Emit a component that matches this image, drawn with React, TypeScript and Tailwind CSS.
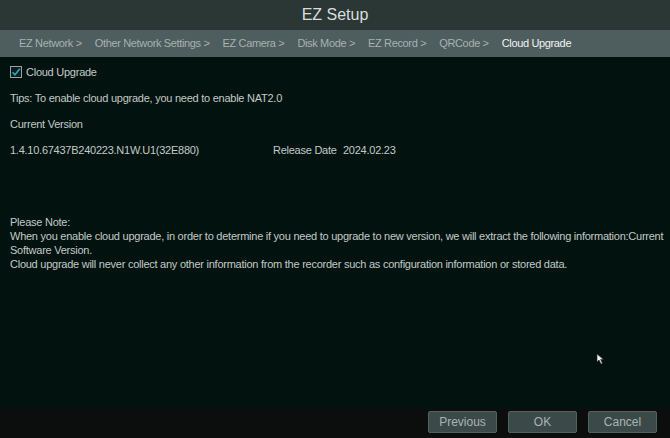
import React from 'react';

const tabs = [
  'EZ Network >',
  'Other Network Settings >',
  'EZ Camera >',
  'Disk Mode >',
  'EZ Record >',
  'QRCode >',
];

const Btn: React.FC<{ label: string }> = ({ label }) => (
  <button className="w-[69px] h-[22px] bg-[#3b4a48] border border-[#55635f] rounded-[2px] text-[12px] text-[#a9b4b1]">
    {label}
  </button>
);

export default function App() {
  return (
    <div
      className="relative w-[670px] h-[438px] flex flex-col bg-[#02130f] overflow-hidden"
      style={{ fontFamily: '"Liberation Sans", Arial, sans-serif' }}
    >
      <div className="h-[30px] bg-[#2b3734] flex items-center justify-center text-[16px] text-[#d9dedd]">
        EZ Setup
      </div>
      <div className="h-[27px] bg-[#4e5d5d] flex items-center pl-[19px] gap-[13px] text-[11px] tracking-[-0.35px] text-[#a8b2b1]">
        {tabs.map((t) => (
          <span key={t}>{t}</span>
        ))}
        <span className="text-[#f2f4f4]">Cloud Upgrade</span>
      </div>

      <div className="flex-1 px-[10px] text-[11px] tracking-[-0.25px] text-[#c3c9c7]">
        <div className="mt-[8px] h-[14px] flex items-center gap-[4px]">
          <div className="w-[12px] h-[12px] border border-[#9aa3a1] bg-[#0b1e1b] flex items-center justify-center">
            <svg width="10" height="10" viewBox="0 0 10 10">
              <path d="M1.5 5.2 L4 7.8 L8.8 1.8" fill="none" stroke="#2ea6c4" strokeWidth="1.6" />
            </svg>
          </div>
          <span>Cloud Upgrade</span>
        </div>
        <div className="mt-[12px] h-[14px] flex items-center">
          Tips: To enable cloud upgrade, you need to enable NAT2.0
        </div>
        <div className="mt-[12px] h-[14px] flex items-center">Current Version</div>
        <div className="mt-[12px] h-[14px] flex items-center">
          <span className="w-[263px]">1.4.10.67437B240223.N1W.U1(32E880)</span>
          <span className="w-[70px]">Release Date</span>
          <span>2024.02.23</span>
        </div>
        <div className="mt-[58px] leading-[14px]">
          <div>Please Note:</div>
          <div className="whitespace-nowrap">
            When you enable cloud upgrade, in order to determine if you need to upgrade to new version, we will extract
            the following information:Current
          </div>
          <div>Software Version.</div>
          <div>
            Cloud upgrade will never collect any other information from the recorder such as configuration information or
            stored data.
          </div>
        </div>
      </div>

      <div className="h-[30px] bg-[#0c0e0e] flex items-center justify-end gap-[11px] pr-[13px] pb-[2px]">
        <Btn label="Previous" />
        <Btn label="OK" />
        <Btn label="Cancel" />
      </div>

      <svg className="absolute left-[596px] top-[353px]" width="10" height="12" viewBox="0 0 10 12">
        <path d="M1 1 L1 9 L3 7 L5 11 L6.5 10.3 L4.6 6.5 L7.5 6.5 Z" fill="#f0f0f0" stroke="#222" strokeWidth="0.6" />
      </svg>
    </div>
  );
}
